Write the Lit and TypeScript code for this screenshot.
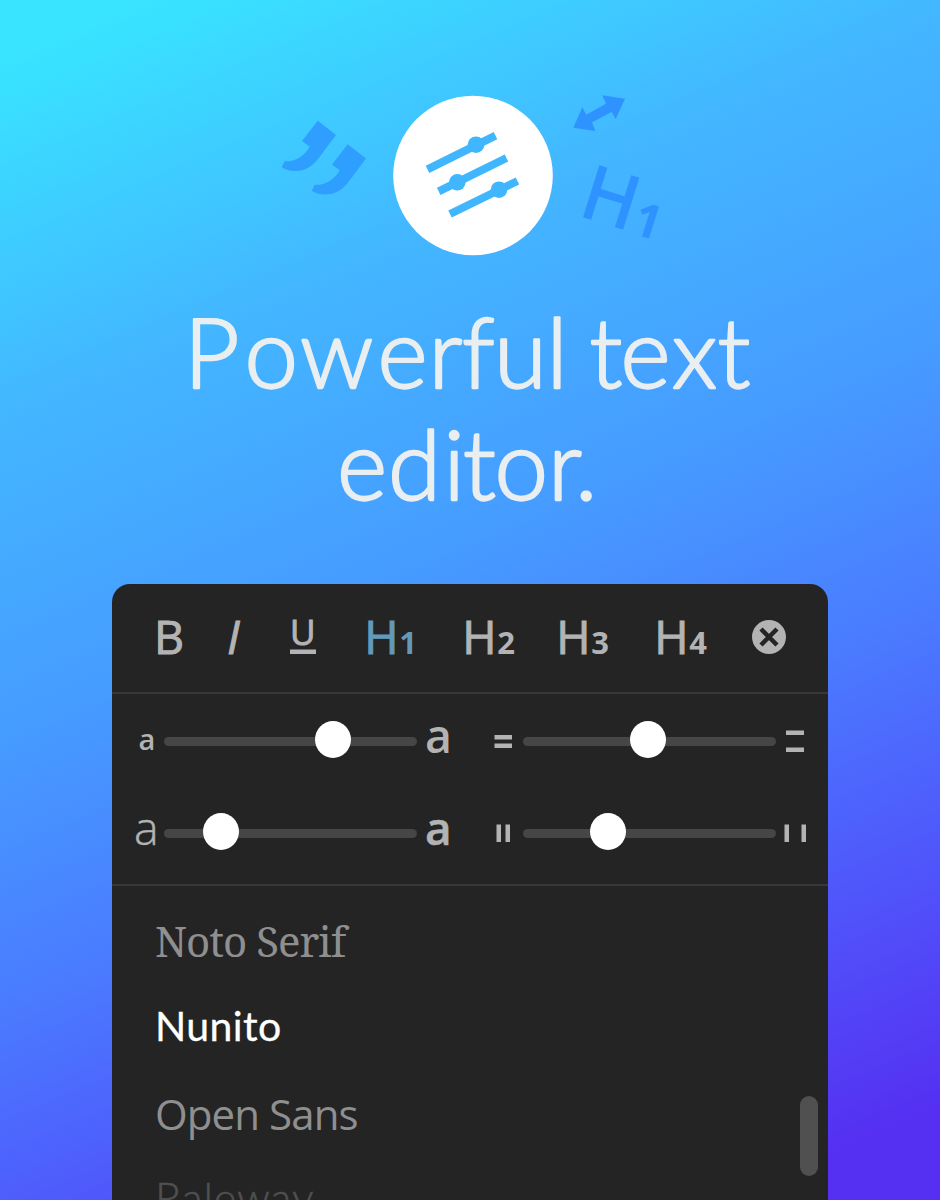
import { LitElement, html, svg, css } from "lit";
import { customElement } from "lit/decorators.js";

const QUOTE =
  "M47.7 40.7L66 55L51 75C44 85 37 91 25 91C20 91 15 89.500 11.700 87.300L14.700 81.300C24 82 34 77 39.700 66.700L32 61Z";

@customElement("app-root")
export class AppRoot extends LitElement {
  static styles = css`
    :host {
      display: block;
      font-family: "Open Sans", sans-serif;
    }
    .page {
      height: 1200px;
      overflow: hidden;
      box-sizing: border-box;
      display: flex;
      flex-direction: column;
      align-items: center;
      background: linear-gradient(157deg, #38e4ff 4%, #43b6ff 26%, #469cff 46%, #4a7bff 63%, #5052fa 80%, #5530f2 94%);
    }
    svg { display: block; flex: none; overflow: visible; }
    .emblem { margin-top: 80px; }
    h1 { margin: 20px 0 0; height: 294px; width: 700px; }
    h1 svg {
      fill: #e9eef1;
      stroke: #e9eef1;
      stroke-width: 2.3px;
      stroke-linejoin: round;
      font: 300 96px Lato, sans-serif;
    }
    .panel {
      width: 716px;
      height: 616px;
      flex: none;
      border-radius: 18px 18px 0 0;
      background: #242424;
      overflow: hidden;
      color: #b3b3b3;
    }
    .tools {
      display: flex;
      height: 108px;
      border-bottom: 2px solid #383838;
    }
    .tools svg, .sliders svg { fill: currentColor; }
    .medium { stroke: currentColor; stroke-width: 1px; font-size: 46.500px; }
    .small { font-size: 35px; }
    .digit { font-size: 31px; font-weight: 700; }
    .on { color: #639ab8; }
    .sliders {
      display: grid;
      grid-template-columns: 358px 358px;
      grid-template-rows: 92px 98px;
      border-bottom: 2px solid #383838;
    }
    .slider { display: flex; height: 92px; }
    .track {
      position: relative;
      width: 253px;
      height: 9px;
      margin-top: 43px;
      border-radius: 5px;
      background: #464646;
    }
    .knob {
      position: absolute;
      top: -16px;
      width: 36px;
      height: 37px;
      border-radius: 50%;
      background: #fff;
    }
    .fonts { display: flex; height: 314px; justify-content: space-between; }
    ul { list-style: none; margin: 0; padding: 11px 0 0 43px; }
    li { height: 87px; line-height: 87px; white-space: nowrap; color: #8f8f8f; font-size: 42px; }
    .serif { font-family: "Noto Serif", "Liberation Serif", serif; letter-spacing: -1px; }
    .nunito {
      margin-top: -2px;
      font-family: Lato, sans-serif;
      color: #fff;
      font-size: 41px;
      letter-spacing: 0.4px;
      -webkit-text-stroke: 0.3px #fff;
    }
    .open { margin-top: 1px; letter-spacing: -0.9px; }
    .raleway {
      margin-top: -3px;
      font-family: Lato, sans-serif;
      font-size: 43px;
      font-weight: 300;
      letter-spacing: 0.9px;
      color: #505050;
      -webkit-text-stroke: 0.5px #505050;
    }
    .bar { width: 18px; height: 80px; border-radius: 9px; margin: 210px 10px 0 0; background: #505050; }
  `;

  private heading(n: number, w: number, x: number, on = false) {
    return html`<svg class=${on ? "on" : ""} width=${w} height="108">
      <text class="medium" x=${x} y="69.500">H</text>
      <text class="digit" x=${x + 35} y="70">${n}</text>
    </svg>`;
  }

  private slider(lw: number, left: unknown, pos: number, right: unknown) {
    return html`<div class="slider">
      <svg width=${lw} height="92">${left}</svg>
      <div class="track"><div class="knob" style="left:${pos}px"></div></div>
      <svg width=${105 - lw} height="92">${right}</svg>
    </div>`;
  }

  render() {
    return html`<main class="page">
      <svg class="emblem" width="400" height="190" viewBox="0 0 400 190">
        <g fill="#2e9eff">
          <path d=${QUOTE} />
          <path d=${QUOTE} transform="translate(30 23.500)" />
        </g>
        <circle cx="203" cy="95.500" r="79.800" fill="#fff" />
        <g stroke="#40b6ff" stroke-width="8">
          <path d="M157.500 89.300L225.500 55.700M168.700 111.300L236.500 78M180 134L247.500 101" />
        </g>
        <g fill="#40b6ff">
          <circle cx="206" cy="64.700" r="8.300" />
          <circle cx="187.300" cy="102.300" r="8.300" />
          <circle cx="229" cy="109.700" r="8.300" />
        </g>
        <path fill="#2e93ff" d="M355 18.700L332.300 15.300L336 23.700L316.300 34.700L312.300 27.300L303.300 47.700L325.300 51L322 42.300L341.700 32L345.700 39Z" />
        <g fill="#2e93ff" transform="translate(313.300 137) rotate(17.400)">
          <text x="-6" y="-1" font-size="73" stroke="#2e93ff" stroke-width="2.400">H</text>
          <text x="49.500" y="1" font-size="47" font-weight="700">1</text>
        </g>
      </svg>
      <h1>
        <svg width="700" height="294">
          <text y="98" x="64 124.500 180 257.500 308.500 342 374 426.500 459 469.500 500.500 552 597.500">Powerful text</text>
          <text y="210" x="217 268 323.500 343 374.500 428 455">editor.</text>
        </svg>
      </h1>
      <section class="panel">
        <div class="tools">
          <svg width="100" height="108"><text class="medium" x="41.900" y="69.500">B</text></svg>
          <svg width="60" height="108"><text class="medium" x="15" y="69.500" font-style="italic">I</text></svg>
          <svg width="80" height="108">
            <text class="medium small" x="18" y="61">U</text>
            <rect x="18" y="65.500" width="26" height="4.500" />
          </svg>
          ${this.heading(1, 100, 12.2, true)}
          ${this.heading(2, 90, 10.2)}
          ${this.heading(3, 100, 14.2)}
          ${this.heading(4, 90, 12.2)}
          <svg width="96" height="108">
            <circle cx="37" cy="53" r="17" />
            <path d="M29 45L45 61M45 45L29 61" stroke="#242424" stroke-width="4.500" />
          </svg>
        </div>
        <div class="sliders">
          ${this.slider(
            52,
            svg`<text x="26.500" y="56" font-size="29" font-weight="600">a</text>`,
            151,
            svg`<text x="8" y="58.500" font-size="46.500" font-weight="600">a</text>`
          )}
          ${this.slider(
            53,
            svg`<path d="M24.500 41h17.500v4.500h-17.500zM24.500 49.500h17.500v4.500h-17.500z"/>`,
            107,
            svg`<path d="M10 36.500h18v4.500h-18zM10 53.500h18v4.500h-18z"/>`
          )}
          ${this.slider(
            52,
            svg`<text x="22" y="58.500" font-size="46.500" font-weight="300" stroke="currentColor" stroke-width=".4">a</text>`,
            39,
            svg`<text x="8" y="58.500" font-size="46" font-weight="600" stroke="currentColor" stroke-width=".5">a</text>`
          )}
          ${this.slider(
            53,
            svg`<path d="M26.500 38.500h4.500v17.500h-4.500zM35.500 38.500h4.500v17.500h-4.500z"/>`,
            67,
            svg`<path d="M8.500 38.500h4.500v17.500h-4.500zM25.500 38.500h4.500v17.500h-4.500z"/>`
          )}
        </div>
        <div class="fonts">
          <ul>
            <li class="serif">Noto Serif</li>
            <li class="nunito">Nunito</li>
            <li class="open">Open Sans</li>
            <li class="raleway">Raleway</li>
          </ul>
          <div class="bar"></div>
        </div>
      </section>
    </main>`;
  }
}
